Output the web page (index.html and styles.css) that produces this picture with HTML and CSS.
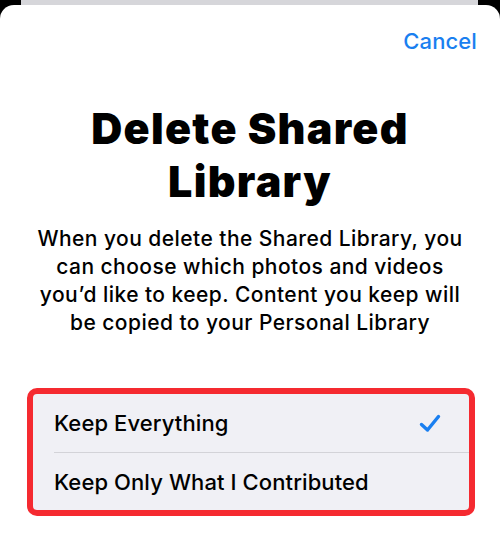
FILE: index.html
```html
<!DOCTYPE html>
<html lang="en">
<head>
<meta charset="utf-8">
<link rel="stylesheet" href="styles.css">
</head>
<body>
<div class="screen">
  <div class="back-card"></div>
  <div class="sheet">
    <div class="header"><span class="cancel">Cancel</span></div>
    <h1 class="title">Delete Shared<br>Library</h1>
    <p class="desc">When you delete the Shared Library, you<br>can choose which photos and videos<br>you’d like to keep. Content you keep will<br>be copied to your Personal Library</p>
    <div class="options">
      <div class="row">
        <span class="label">Keep Everything</span>
        <svg class="check" width="22" height="19" viewBox="0 0 22 19"><path d="M2.5 10.5 L8.5 16 L19.5 2.5" fill="none" stroke="#1a7ff0" stroke-width="3.4" stroke-linecap="round" stroke-linejoin="round"/></svg>
      </div>
      <div class="row">
        <span class="label">Keep Only What I Contributed</span>
      </div>
    </div>
  </div>
</div>
</body>
</html>
```
FILE: styles.css
```css
html, body {
  margin: 0;
  padding: 0;
  background: #000;
}
body {
  font-family: Inter, "Noto Sans", "Liberation Sans", sans-serif;
  color: #000;
}
.screen {
  width: 500px;
  height: 543px;
  display: flex;
  flex-direction: column;
  overflow: hidden;
}
.back-card {
  height: 5px;
  margin: 0 22px 0 21px;
  background: #d6d6da;
  flex: none;
}
.sheet {
  flex: 1;
  background: #fff;
  border-radius: 14px 14px 0 0;
  display: flex;
  flex-direction: column;
}
.header {
  display: flex;
  justify-content: flex-end;
  padding: 22px 23px 0 0;
}
.cancel {
  font-size: 22px;
  line-height: 28px;
  font-weight: 500;
  color: #1a7ff0;
  letter-spacing: 0.1px;
}
.title {
  margin: 47px 0 0;
  text-align: center;
  font-size: 43px;
  line-height: 53px;
  font-weight: 900;
  letter-spacing: 1.3px;
}
.desc {
  margin: 17px 0 0;
  text-align: center;
  font-size: 21px;
  line-height: 28px;
  font-weight: 500;
  letter-spacing: 0.45px;
}
.options {
  margin: 51px 25px 0 27px;
  border: 6px solid #f52a30;
  border-radius: 10px;
  background: #f0f0f5;
  display: flex;
  flex-direction: column;
}
.row {
  height: 58px;
  margin-left: 21px;
  padding-right: 28px;
  display: flex;
  align-items: center;
  justify-content: space-between;
  box-sizing: border-box;
}
.row + .row {
  border-top: 1px solid #d3d3d8;
}
.label {
  font-size: 22px;
  font-weight: 500;
  letter-spacing: 0.1px;
}
.check {
  display: block;
}
```
